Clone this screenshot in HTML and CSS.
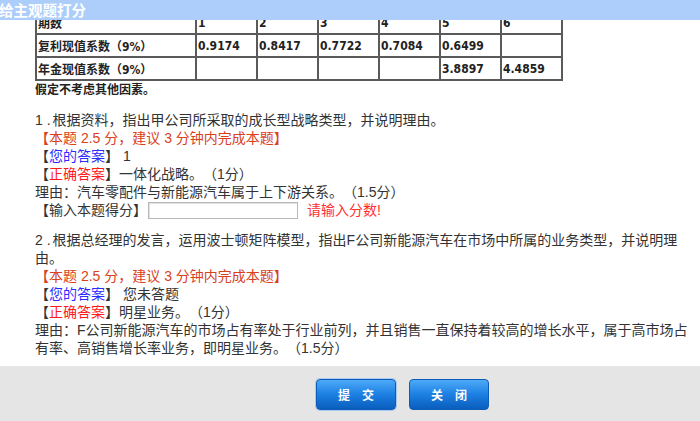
FILE: index.html
```html
<!DOCTYPE html>
<html>
  <head>
    <meta charset="UTF-8">
    <title>给主观题打分</title>
    <link rel="stylesheet" href="styles.css">
  </head>
  <body>
    <div class="dialog">
      <div class="dialog-title">给主观题打分</div>
      <div class="dialog-body">
        <div class="scroll">
          <table class="factor">
            <colgroup>
              <col class="c-name"><col><col><col><col><col><col>
            </colgroup>
            <tr><td>期数</td><td>1</td><td>2</td><td>3</td><td>4</td><td>5</td><td>6</td></tr>
            <tr><td>复利现值系数（9%）</td><td>0.9174</td><td>0.8417</td><td>0.7722</td><td>0.7084</td><td>0.6499</td><td></td></tr>
            <tr><td>年金现值系数（9%）</td><td></td><td></td><td></td><td></td><td>3.8897</td><td>4.4859</td></tr>
          </table>
          <p class="note">假定不考虑其他因素。</p>

          <!-- question 1 -->
          <div class="question">
            <div><span class="no">1 .</span>根据资料，指出甲公司所采取的成长型战略类型，并说明理由。</div>
            <div class="tip">【本题 2.5 分，建议 3 分钟内完成本题】</div>
            <div>【<span class="mine">您的答案</span>】 1</div>
            <div>【<span class="right">正确答案</span>】一体化战略。（1分）</div>
            <div>理由：汽车零配件与新能源汽车属于上下游关系。（1.5分）</div>
            <div class="score-row">【输入本题得分】<input type="text" class="score"><span class="warn">请输入分数!</span></div>
          </div>

          <!-- question 2 -->
          <div class="question">
            <div><span class="no">2 .</span>根据总经理的发言，运用波士顿矩阵模型，指出F公司新能源汽车在市场中所属的业务类型，并说明理由。</div>
            <div class="tip">【本题 2.5 分，建议 3 分钟内完成本题】</div>
            <div>【<span class="mine">您的答案</span>】 您未答题</div>
            <div>【<span class="right">正确答案</span>】明星业务。（1分）</div>
            <div>理由：F公司新能源汽车的市场占有率处于行业前列，并且销售一直保持着较高的增长水平，属于高市场占有率、高销售增长率业务，即明星业务。（1.5分）</div>
          </div>
        </div>
      </div>
      <div class="dialog-foot">
        <button class="btn btn-focus">提　交</button>
        <button class="btn">关　闭</button>
      </div>
    </div>
  </body>
</html>
```

FILE: styles.css
```css
/* page */
body {
  margin: 0;
  font-family: "Liberation Sans", "Noto Sans CJK SC", sans-serif;
  color: #333;
  text-spacing-trim: space-all;
}

.dialog {
  display: flex;
  flex-direction: column;
  height: 421px;
  overflow: hidden;
}

/* title bar */
.dialog-title {
  height: 20px;
  line-height: 20px;
  flex-shrink: 0;
  background-color: #adcefa;
  color: #fff;
  font-family: "Noto Sans CJK SC", sans-serif;
  font-size: 14.5px;
  font-weight: bold;
  margin-left: -1px;
  position: relative;
  z-index: 1;
}

/* content, scrolled a little */
.dialog-body {
  flex: 1;
  overflow: hidden;
}

.scroll {
  margin-top: -10px;
  padding: 0 5px 0 35px;
}

/* factor table */
.factor {
  border-collapse: collapse;
  table-layout: fixed;
  width: 526px;
  font-family: "DejaVu Sans Condensed", "Liberation Sans", "Noto Sans CJK SC", sans-serif;
  font-size: 12px;
  font-weight: bold;
  color: #222;
}

.factor col {
  width: 61px;
}

.factor col.c-name {
  width: 160px;
}

.factor td {
  border: 2px solid #5a5a5a;
  height: 21px;
  padding: 0 1px;
  white-space: nowrap;
}

.note {
  margin: 0;
  font-size: 12px;
  font-weight: bold;
  line-height: 18px;
  color: #222;
}

/* questions */
.question {
  margin-top: 12px;
  font-size: 14px;
  line-height: 18px;
}

.no {
  margin-right: 2px;
}

.tip {
  color: #d9401c;
}

.mine {
  color: #2b2bff;
}

.right {
  color: #ff1a1a;
}

.score-row {
  display: flex;
  align-items: center;
  height: 18px;
}

.score {
  width: 150px;
  height: 17px;
  box-sizing: border-box;
  margin: 0 0 0 1px;
  padding: 0 2px;
  border: 1px solid #b8b8b8;
  box-shadow: inset 1px 1px 0 #e2e2e2;
}

.warn {
  margin-left: 9px;
  color: #ff3030;
}

/* footer buttons */
.dialog-foot {
  height: 55px;
  flex-shrink: 0;
  box-sizing: border-box;
  background-color: #e5e5e5;
  display: flex;
  gap: 13px;
  padding: 13px 0 0 316px;
}

.btn {
  width: 80px;
  height: 31px;
  border: 1px solid #0c5cb8;
  border-radius: 4px;
  background: linear-gradient(#4eaaf8, #1c80e2 50%, #0a5dbd);
  color: #fff;
  font-family: "Noto Sans CJK SC", sans-serif;
  font-size: 12px;
  font-weight: bold;
  padding: 0;
  cursor: pointer;
}

.btn-focus {
  box-shadow: 0 0 0 1px #a9c8f2;
}
```
